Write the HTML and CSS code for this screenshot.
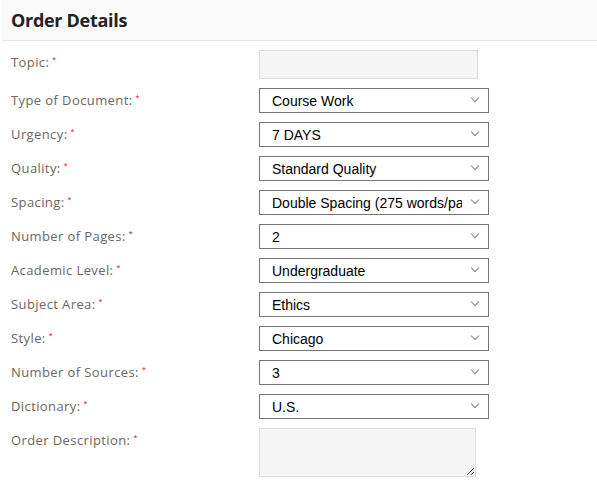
FILE: index.html
```html
<!DOCTYPE html>
<html lang="en">
<head>
    <meta charset="UTF-8">
    <meta name="viewport" content="width=device-width, initial-scale=1.0">
    <link rel="stylesheet" href="styles.css">
    <title>Order Details</title>
</head>
<body>
    <section class="orderBox">
        <div class="orderBox_header">
            <h2>Order Details</h2>
        </div>
        <form class="orderForm">
            <label>Topic:<span class="req">*</span></label>
            <input type="text" class="orderForm_text">

            <label>Type of Document:<span class="req">*</span></label>
            <div class="selectBox"><select><option>Course Work</option></select></div>

            <label>Urgency:<span class="req">*</span></label>
            <div class="selectBox"><select><option>7 DAYS</option></select></div>

            <label>Quality:<span class="req">*</span></label>
            <div class="selectBox"><select><option>Standard Quality</option></select></div>

            <label>Spacing:<span class="req">*</span></label>
            <div class="selectBox"><select><option>Double Spacing (275 words/page)</option></select></div>

            <label>Number of Pages:<span class="req dark">*</span></label>
            <div class="selectBox"><select><option>2</option></select></div>

            <label>Academic Level:<span class="req">*</span></label>
            <div class="selectBox"><select><option>Undergraduate</option></select></div>

            <label>Subject Area:<span class="req">*</span></label>
            <div class="selectBox"><select><option>Ethics</option></select></div>

            <label>Style:<span class="req">*</span></label>
            <div class="selectBox"><select><option>Chicago</option></select></div>

            <label>Number of Sources:<span class="req">*</span></label>
            <div class="selectBox"><select><option>3</option></select></div>

            <label>Dictionary:<span class="req">*</span></label>
            <div class="selectBox"><select><option>U.S.</option></select></div>

            <label>Order Description:<span class="req">*</span></label>
            <textarea class="orderForm_desc"></textarea>
        </form>
    </section>
</body>
</html>
```

FILE: styles.css
```css
body,
h2 {
    margin: 0;
    padding: 0;
}

body {
    background-color: #FFF;
    font-family: 'Open Sans', sans-serif;
}

.orderBox {
    margin-left: 2px;
}

.orderBox_header {
    height: 40px;
    background-color: #fafafa;
    border-bottom: 1px solid #e6e6e6;
    display: flex;
    align-items: center;
    padding-left: 9px;
}

.orderBox_header h2 {
    font-size: 18px;
    font-weight: bold;
    color: #222;
    letter-spacing: -0.3px;
}

.orderForm {
    display: grid;
    grid-template-columns: 248px 230px;
    align-items: start;
    row-gap: 9px;
    padding: 9px 0 0 9px;
}

.orderForm label {
    font-size: 13px;
    height: 24px;
    line-height: 24px;
    color: #6b6661;
    letter-spacing: 0.4px;
}

.req {
    color: #e00;
    font-size: 7px;
    line-height: 0;
    vertical-align: 5px;
    margin-left: 3px;
}

.req.dark {
    color: #333;
}

.orderForm_text {
    display: block;
    width: 219px;
    height: 29px;
    box-sizing: border-box;
    background-color: #f5f5f5;
    border: 1px solid #ddd;
    outline: none;
}

/* select com seta propria */
.selectBox {
    position: relative;
    width: 230px;
    height: 25px;
}

.selectBox select {
    display: block;
    appearance: none;
    width: 230px;
    height: 25px;
    box-sizing: border-box;
    border: 1px solid #767676;
    border-radius: 0;
    background-color: #FFF;
    font-family: 'Liberation Sans', Arial, sans-serif;
    font-size: 14px;
    color: #000;
    padding: 0 26px 0 12px;
    outline: none;
}

.selectBox::after {
    content: '';
    position: absolute;
    right: 11px;
    top: 7px;
    width: 5px;
    height: 5px;
    border-right: 1px solid #888;
    border-bottom: 1px solid #888;
    transform: rotate(45deg);
    pointer-events: none;
}

.orderForm_desc {
    display: block;
    width: 217px;
    height: 49px;
    box-sizing: border-box;
    background-color: #f5f5f5;
    border: 1px solid #ddd;
    outline: none;
    resize: vertical;
}
```
